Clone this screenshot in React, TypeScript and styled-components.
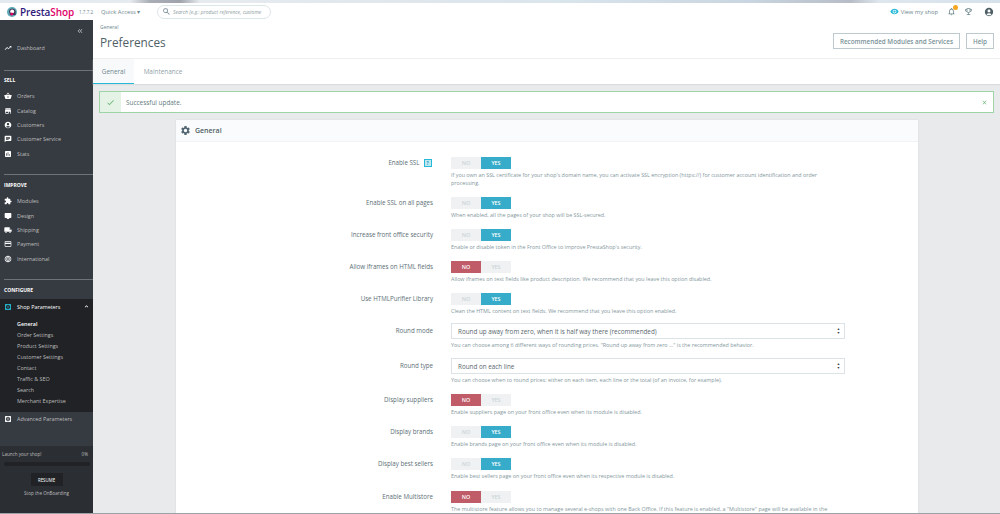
import React from "react";
import styled, { createGlobalStyle } from "styled-components";
import {
  MdKeyboardDoubleArrowLeft, MdExpandLess, MdTrendingUp, MdShoppingBasket, MdStore, MdAccountCircle, MdChat, MdAssessment,
  MdExtension, MdDesktopMac, MdLocalShipping, MdPayment, MdLanguage, MdSettings, MdSettingsApplications, MdSearch,
  MdVisibility, MdNotificationsNone, MdOutlineEmojiEvents, MdCheck, MdClose,
} from "react-icons/md";

const Global = createGlobalStyle`
  html, body { margin: 0; height: 100%; overflow: hidden; }
  body { font-family: "Open Sans", "Liberation Sans", sans-serif; background: #fff; color: #6c868e; }
  * { box-sizing: border-box; }
`;
const Page = styled.div`width: 1000px; height: 514px; overflow: hidden; display: flex; flex-direction: column; border-bottom: 1px solid #98a2a9;`;
const TopStrip = styled.div`height: 3px; flex: none; background: linear-gradient(90deg, #e3eaf0 0%, #e6ebef 13%, #a9adb5 15%, #9fa4ac 18%, #e6ebef 20%, #dbe5ec 55%, #c9d5e0 75%, #b7bdc6 85%, #dfe7ee 88%, #d6e1ea 100%);`;
const Header = styled.header`height: 17px; flex: none; display: flex; align-items: center; background: #fff; padding-right: 6px;`;
const Logo = styled.div`width: 79px; display: flex; align-items: center; padding-left: 7px; gap: 3px; font-size: 10px; font-weight: 600; color: #2f1a7a; letter-spacing: -0.1px;`;
const LogoWord = styled.span`display: flex;`;
const LogoAccent = styled.span`color: #df0067;`;
const Version = styled.span`font-size: 4.6px; color: #6c868e; width: 22px;`;
const QuickAccess = styled.span`font-size: 5.8px; color: #6c868e; width: 56px; white-space: nowrap;`;
const SearchBox = styled.div`width: 114px; height: 14px; border: 1px solid #dbe6e9; border-radius: 7px; display: flex; align-items: center; gap: 2px; padding-left: 4px; font-size: 5px; font-style: italic; color: #8a9ba0; white-space: nowrap; overflow: hidden;`;
const HeaderRight = styled.div`margin-left: auto; display: flex; align-items: center; color: #6c868e;`;
const ViewShop = styled.span`display: flex; align-items: center; gap: 2px; font-size: 5.8px; color: #6c868e; margin-right: 9px;`;
const BellWrap = styled.span`position: relative; display: flex; margin-right: 8px;`;
const Badge = styled.span`position: absolute; top: -2px; right: -2px; width: 5px; height: 5px; border-radius: 50%; background: #f5a623;`;
const Trophy = styled.span`display: flex; margin-right: 11px;`;
const Account = styled.span`display: flex; color: #4f5f66;`;
const Body = styled.div`flex: 1; display: flex; min-height: 0;`;
const Sidebar = styled.aside`width: 93px; flex: none; background: #363a41; display: flex; flex-direction: column; color: #bebebe; font-size: 5.4px;`;
const Collapse = styled.div`height: 21px; display: flex; justify-content: flex-end; align-items: center; padding-right: 9px; color: #bebebe;`;
const SideItem = styled.div<{ $h?: number; $active?: boolean }>`height: ${p => p.$h ?? 14.4}px; display: flex; align-items: center; gap: 5px; padding-left: 4px; flex: none; background: ${p => p.$active ? "#202226" : "transparent"}; color: ${p => p.$active ? "#fff" : "#bebebe"};`;
const SideIcon = styled.span<{ $on?: boolean }>`display: flex; color: ${p => p.$on ? "#25b9d7" : "#fff"};`;
const Divider = styled.div<{ $top: number }>`height: 1px; background: #6c7279; flex: none; margin: ${p => p.$top}px 0 0 4px;`;
const Section = styled.div<{ $top: number; $bottom: number }>`font-size: 5px; font-weight: 700; color: #fff; padding-left: 4px; margin: ${p => p.$top}px 0 ${p => p.$bottom}px; line-height: 8px; flex: none;`;
const Chevron = styled.span`margin-left: auto; margin-right: 3px; display: flex;`;
const SubMenu = styled.div`background: #202226; padding: 3.6px 0 5.4px 17px; flex: none;`;
const SubItem = styled.div<{ $current?: boolean }>`height: 11px; line-height: 11px; color: ${p => p.$current ? "#fff" : "#bebebe"}; font-weight: ${p => p.$current ? 600 : 400};`;
const Onboarding = styled.div`margin-top: auto; height: 67px; background: #2b2e33; padding: 5px 2px 0; display: flex; flex-direction: column; align-items: center;`;
const OnboardingTop = styled.div`width: 100%; display: flex; justify-content: space-between; font-size: 4.6px; line-height: 6px; padding-right: 3px;`;
const Progress = styled.div`width: 86px; height: 4px; border-radius: 2px; background: #202226; margin-top: 5px;`;
const Resume = styled.div`width: 32px; height: 13px; margin-top: 7px; background: #202226; color: #fff; font-size: 4.4px; display: flex; align-items: center; justify-content: center;`;
const Stop = styled.div`font-size: 4.6px; margin-top: 4px; color: #bebebe;`;
const Main = styled.main`flex: 1; min-width: 0; display: flex; flex-direction: column; background: #e9eaeb;`;
const PageHead = styled.div`background: #fff; height: 39px; flex: none; padding: 3px 6px 0 7px; position: relative; border-bottom: 1px solid #eee;`;
const Crumb = styled.div`font-size: 5px; color: #6c868e; line-height: 8px;`;
const Title = styled.h1`margin: 2px 0 0; font-size: 11.8px; line-height: 18px; font-weight: 400; color: #4f5f66;`;
const HeadActions = styled.div`position: absolute; right: 6px; top: 13px; display: flex; gap: 6px;`;
const OutlineButton = styled.div`height: 16px; padding: 0 6px; border: 1px solid #bccad0; font-size: 6.3px; font-weight: 600; color: #7a9198; display: flex; align-items: center; background: #fff;`;
const Tabs = styled.div`background: #fff; height: 25px; flex: none; display: flex; font-size: 6.4px; box-shadow: 0 1px 1px #ddd;`;
const Tab = styled.div<{ $on?: boolean }>`width: ${p => p.$on ? 41 : 58}px; display: flex; align-items: center; justify-content: center; color: ${p => p.$on ? "#6c868e" : "#8fa3a9"}; border-bottom: ${p => p.$on ? "1px solid #25b9d7" : "none"}; background: ${p => p.$on ? "#f8f9fa" : "#fff"};`;
const Content = styled.div`flex: 1; min-height: 0; padding: 7px 6px 0; overflow: hidden;`;
const Alert = styled.div`height: 22px; border: 1.5px solid #9fd4a6; background: #fff; display: flex; align-items: center; font-size: 6.4px; color: #5f7a80;`;
const AlertIcon = styled.div`width: 21px; height: 100%; background: #e4f3e6; color: #72b97c; display: flex; align-items: center; justify-content: center; margin-right: 5px;`;
const AlertClose = styled.span`margin-left: auto; margin-right: 5px; color: #72b97c; display: flex;`;
const Card = styled.section`width: 742px; margin: 7px 0 0 77px; background: #fff; box-shadow: 0 0 2px rgba(0,0,0,.08); height: 500px;`;
const CardHead = styled.div`height: 22px; background: #fafbfc; display: flex; align-items: center; gap: 4px; padding-left: 4px; font-size: 7px; font-weight: 600; color: #4f5f66; border-bottom: 1px solid #f2f3f4;`;
const GearIcon = styled.span`display: flex; color: #4f6570;`;
const Rows = styled.div`padding-top: 15px; display: flex; flex-direction: column;`;
const Row = styled.div<{ $h: number }>`height: ${p => p.$h}px; display: grid; grid-template-columns: 257px 394px; column-gap: 18px; flex: none;`;
const Label = styled.div`text-align: right; font-size: 6.2px; line-height: 12px; color: #5b6e75; display: flex; justify-content: flex-end; align-items: center; height: 12px; gap: 4px;`;
const HelpIcon = styled.span`width: 8px; height: 8px; margin-right: 1.5px; background: #bfe9f2; border: 1px solid #25b9d7; color: #25a0c0; font-size: 4.5px; line-height: 6px; text-align: center; font-weight: 700;`;
const Toggle = styled.div`width: 60px; height: 12px; display: flex; background: #eff1f2;`;
const ToggleSide = styled.span<{ $kind: "off" | "yes" | "no" }>`flex: 1; display: flex; align-items: center; justify-content: center; font-size: 5.4px; font-weight: 600; color: ${p => p.$kind === "off" ? "#cbd5d8" : "#fff"}; background: ${p => p.$kind === "yes" ? "#36acca" : p.$kind === "no" ? "#c05c67" : "transparent"};`;
const Help = styled.p`margin: 1.5px 0 0; font-size: 5.4px; line-height: 8px; color: #84979d;`;
const SelectBox = styled.div`height: 16px; width: 394px; border: 1px solid #dbe3e6; display: flex; align-items: center; justify-content: space-between; padding: 0 4px 0 6px; font-size: 6.3px; color: #59686e; margin-top: -2px;`;
const Carets = styled.span`display: flex; flex-direction: column; font-size: 3.4px; line-height: 3.6px; color: #363a41;`;

type Setting = { label: string; h: number; help: string; on?: boolean; select?: string; hint?: boolean };
const settings: Setting[] = [
  { label: "Enable SSL", h: 40, on: true, hint: true, help: "If you own an SSL certificate for your shop's domain name, you can activate SSL encryption (https://) for customer account identification and order processing." },
  { label: "Enable SSL on all pages", h: 32, on: true, help: "When enabled, all the pages of your shop will be SSL-secured." },
  { label: "Increase front office security", h: 32, on: true, help: "Enable or disable token in the Front Office to improve PrestaShop's security." },
  { label: "Allow iframes on HTML fields", h: 32, on: false, help: "Allow iframes on text fields like product description. We recommend that you leave this option disabled." },
  { label: "Use HTMLPurifier Library", h: 32, on: true, help: "Clean the HTML content on text fields. We recommend that you leave this option enabled." },
  { label: "Round mode", h: 35, select: "Round up away from zero, when it is half way there (recommended)", help: "You can choose among 6 different ways of rounding prices. \"Round up away from zero ...\" is the recommended behavior." },
  { label: "Round type", h: 34, select: "Round on each line", help: "You can choose when to round prices: either on each item, each line or the total (of an invoice, for example)." },
  { label: "Display suppliers", h: 32, on: false, help: "Enable suppliers page on your front office even when its module is disabled." },
  { label: "Display brands", h: 32, on: true, help: "Enable brands page on your front office even when its module is disabled." },
  { label: "Display best sellers", h: 33, on: true, help: "Enable best sellers page on your front office even when its respective module is disabled." },
  { label: "Enable Multistore", h: 40, on: false, help: "The multistore feature allows you to manage several e-shops with one Back Office. If this feature is enabled, a \"Multistore\" page will be available in the" },
];

const sell: [string, React.ElementType][] = [["Orders", MdShoppingBasket], ["Catalog", MdStore], ["Customers", MdAccountCircle], ["Customer Service", MdChat], ["Stats", MdAssessment]];
const improve: [string, React.ElementType][] = [["Modules", MdExtension], ["Design", MdDesktopMac], ["Shipping", MdLocalShipping], ["Payment", MdPayment], ["International", MdLanguage]];
const subs = ["General", "Order Settings", "Product Settings", "Customer Settings", "Contact", "Traffic & SEO", "Search", "Merchant Expertise"];

export default function App() {
  return (
    <Page>
      <Global />
      <TopStrip />
      <Header>
        <Logo>
          <svg width="10" height="10" viewBox="0 0 10 10"><circle cx="5" cy="5" r="5" fill="#5fa9b8" /><path d="M2 4 A3.4 3.4 0 0 1 8.6 4 L8.6 8 L3 8 Z" fill="#3a3550" /><circle cx="5.2" cy="4.6" r="2" fill="#fff" /><circle cx="4.8" cy="7" r="1.5" fill="#df0067" /></svg>
          <LogoWord>Presta<LogoAccent>Shop</LogoAccent></LogoWord>
        </Logo>
        <Version>1.7.7.2</Version>
        <QuickAccess>Quick Access ▾</QuickAccess>
        <SearchBox><MdSearch size={9} color="#6c868e" /> Search (e.g.: product reference, custome</SearchBox>
        <HeaderRight>
          <ViewShop><MdVisibility size={9} color="#25b9d7" /> View my shop</ViewShop>
          <BellWrap><MdNotificationsNone size={9} /><Badge /></BellWrap>
          <Trophy><MdOutlineEmojiEvents size={9} /></Trophy>
          <Account><MdAccountCircle size={10} /></Account>
        </HeaderRight>
      </Header>
      <Body>
        <Sidebar>
          <Collapse><MdKeyboardDoubleArrowLeft size={8} /></Collapse>
          <SideItem $h={14}><SideIcon><MdTrendingUp size={8} /></SideIcon> Dashboard</SideItem>
          <Divider $top={15} />
          <Section $top={5} $bottom={5}>SELL</Section>
          {sell.map(([t, I]) => <SideItem key={t}><SideIcon><I size={8} /></SideIcon> {t}</SideItem>)}
          <Divider $top={13} />
          <Section $top={6} $bottom={5}>IMPROVE</Section>
          {improve.map(([t, I]) => <SideItem key={t}><SideIcon><I size={8} /></SideIcon> {t}</SideItem>)}
          <Divider $top={13} />
          <Section $top={6} $bottom={5}>CONFIGURE</Section>
          <SideItem $active $h={16}><SideIcon $on><MdSettingsApplications size={8} /></SideIcon> Shop Parameters<Chevron><MdExpandLess size={7} /></Chevron></SideItem>
          <SubMenu>{subs.map((s, i) => <SubItem key={s} $current={i === 0}>{s}</SubItem>)}</SubMenu>
          <SideItem $h={14}><SideIcon><MdSettingsApplications size={8} /></SideIcon> Advanced Parameters</SideItem>
          <Onboarding>
            <OnboardingTop><span>Launch your shop!</span><span>0%</span></OnboardingTop>
            <Progress />
            <Resume>RESUME</Resume>
            <Stop>Stop the OnBoarding</Stop>
          </Onboarding>
        </Sidebar>
        <Main>
          <PageHead>
            <Crumb>General</Crumb>
            <Title>Preferences</Title>
            <HeadActions>
              <OutlineButton>Recommended Modules and Services</OutlineButton>
              <OutlineButton>Help</OutlineButton>
            </HeadActions>
          </PageHead>
          <Tabs><Tab $on>General</Tab><Tab>Maintenance</Tab></Tabs>
          <Content>
            <Alert>
              <AlertIcon><MdCheck size={9} /></AlertIcon>
              Successful update.
              <AlertClose><MdClose size={7} /></AlertClose>
            </Alert>
            <Card>
              <CardHead><GearIcon><MdSettings size={11} /></GearIcon> General</CardHead>
              <Rows>
                {settings.map(s => (
                  <Row key={s.label} $h={s.h}>
                    <Label>{s.label}{s.hint && <HelpIcon>?</HelpIcon>}</Label>
                    <div>
                      {s.select ? (
                        <SelectBox>{s.select}<Carets><span>▲</span><span>▼</span></Carets></SelectBox>
                      ) : (
                        <Toggle>
                          <ToggleSide $kind={s.on ? "off" : "no"}>NO</ToggleSide>
                          <ToggleSide $kind={s.on ? "yes" : "off"}>YES</ToggleSide>
                        </Toggle>
                      )}
                      <Help>{s.help}</Help>
                    </div>
                  </Row>
                ))}
              </Rows>
            </Card>
          </Content>
        </Main>
      </Body>
    </Page>
  );
}
